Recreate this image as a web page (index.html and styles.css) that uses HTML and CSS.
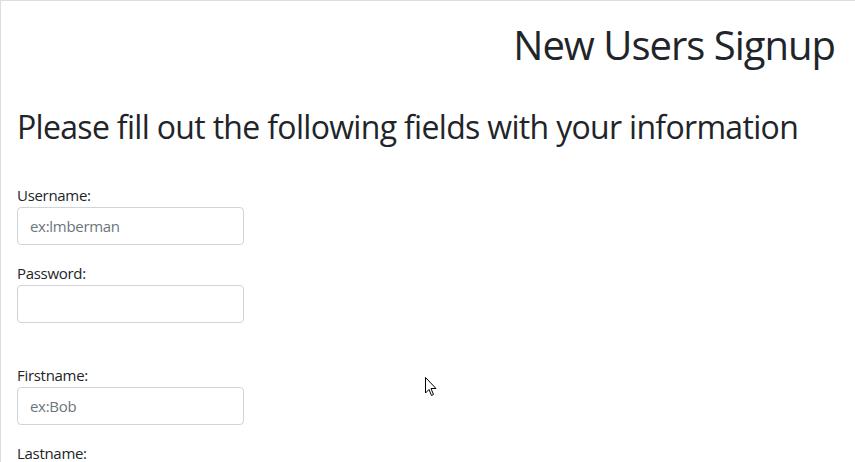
FILE: index.html
```html
<!DOCTYPE html>
<html>
<head>
<meta charset="utf-8">
<link rel="stylesheet" href="styles.css">
</head>
<body>
<div class="card">
  <h1 class="title">New Users Signup</h1>
  <h2 class="subtitle">Please fill out the following fields with your information</h2>
  <form class="form">
    <div class="group">
      <label class="label">Username:</label>
      <input class="input" type="text" placeholder="ex:lmberman">
    </div>
    <div class="group">
      <label class="label">Password:</label>
      <input class="input" type="password">
    </div>
    <div class="spacer"></div>
    <div class="group">
      <label class="label">Firstname:</label>
      <input class="input" type="text" placeholder="ex:Bob">
    </div>
    <div class="group">
      <label class="label">Lastname:</label>
      <input class="input" type="text" placeholder="ex:Smith">
    </div>
  </form>
</div>
<svg class="cursor" width="12" height="20" viewBox="0 0 12 20">
  <path d="M0.5 0.5 L0.5 16 L4 12.5 L6.5 18.5 L8.5 17.5 L6 11.5 L11 11.5 Z" fill="#fff" stroke="#000" stroke-width="1" stroke-linejoin="miter"/>
</svg>
</body>
</html>
```
FILE: styles.css
```css
html, body {
  margin: 0;
  padding: 0;
  background: #fff;
  overflow: hidden;
}
body {
  font-family: "Open Sans", "Noto Sans", sans-serif;
  color: #212529;
  width: 855px;
  height: 462px;
  position: relative;
}
.card {
  border-top: 1px solid #dedede;
  border-left: 1px solid #dedede;
  padding: 0 20px 0 16px;
  height: 462px;
  box-sizing: border-box;
  overflow: hidden;
}
.title {
  margin: 0;
  padding-top: 20px;
  text-align: right;
  font-weight: 400;
  font-size: 40px;
  line-height: 48px;
  letter-spacing: -1px;
}
.subtitle {
  margin: 39px 0 0;
  font-weight: 400;
  font-size: 32px;
  line-height: 38px;
  letter-spacing: -0.68px;
}
.form {
  margin-top: 37px;
}
.group {
  display: flex;
  flex-direction: column;
  align-items: flex-start;
  margin-bottom: 16px;
}
.label {
  font-size: 15px;
  line-height: 24px;
  letter-spacing: -0.3px;
}
.input {
  width: 227px;
  height: 38px;
  box-sizing: border-box;
  border: 1px solid #ced4da;
  border-radius: 4px;
  padding: 6px 12px;
  font-family: inherit;
  font-size: 15px;
  color: #495057;
  letter-spacing: -0.3px;
}
.input::placeholder {
  color: #6c757d;
}
.spacer {
  height: 24px;
}
.cursor {
  position: absolute;
  left: 425px;
  top: 377px;
}
```
